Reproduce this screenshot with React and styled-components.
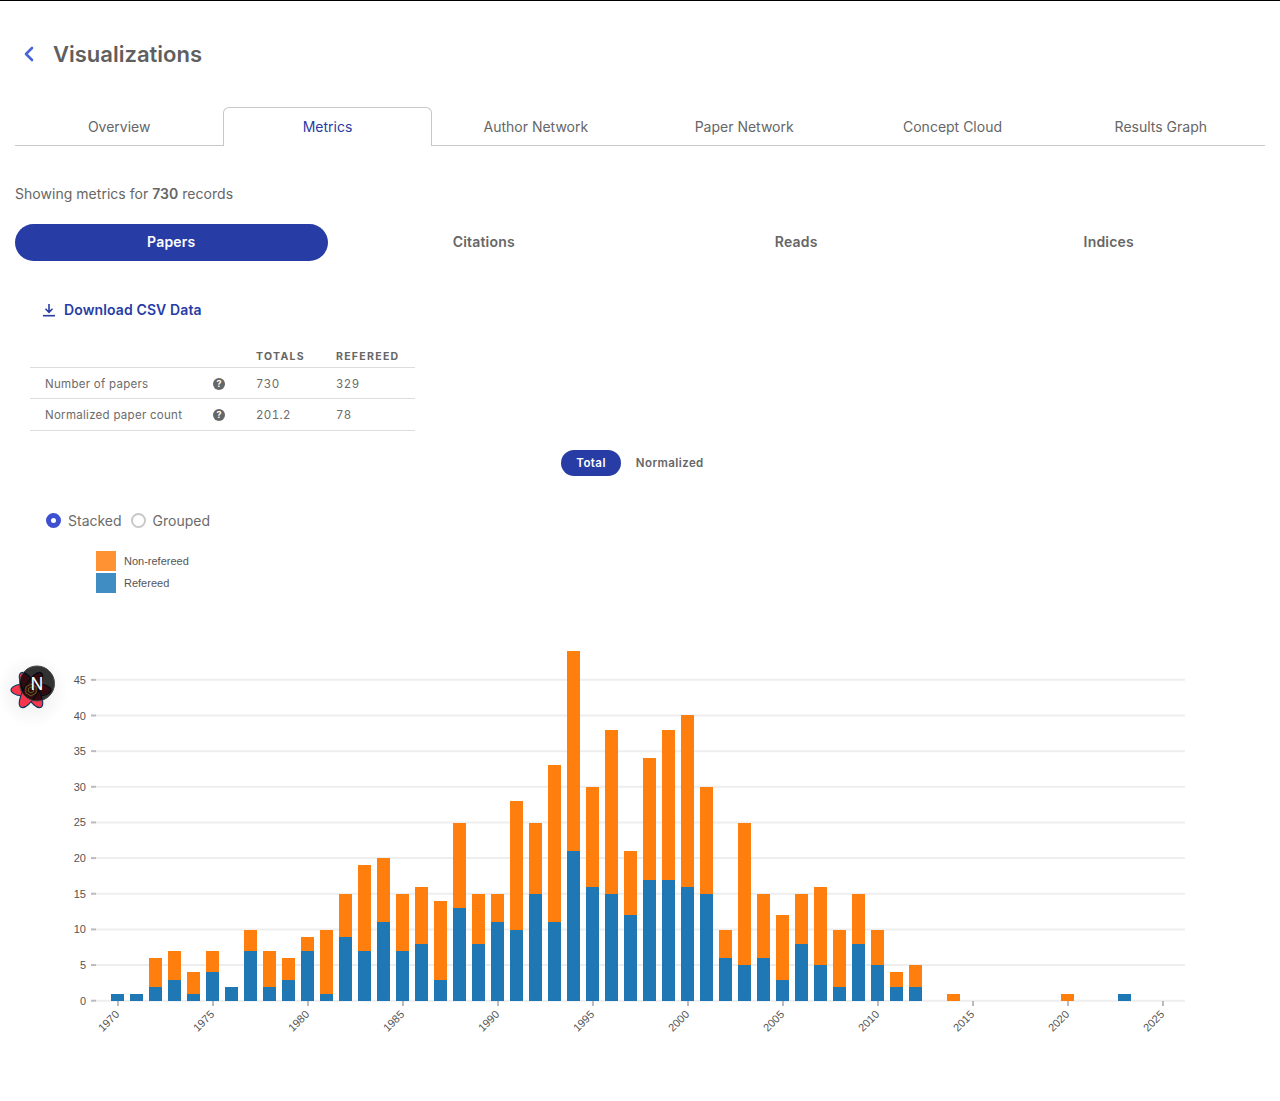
import React from "react";
import styled, { createGlobalStyle } from "styled-components";

const Global = createGlobalStyle`
  html, body { margin: 0; padding: 0; background: #fff; }
  body { font-family: Inter, "Liberation Sans", sans-serif; color: #666; }
  * { box-sizing: border-box; }
`;

const Page = styled.div`
  position: relative;
  border-top: 1px solid #000;
  min-height: 1101px;
  padding: 33px 15px 0;
`;
const Header = styled.header`
  display: flex;
  align-items: center;
  height: 40px;
  padding-left: 8px;
  gap: 16px;
`;
const BackLink = styled.a`
  display: flex;
  width: 14px;
  color: #4a63d8;
`;
const Title = styled.h1`
  margin: 0;
  font-size: 22px;
  line-height: 40px;
  font-weight: 600;
  color: #5f5f5f;
`;
const Tabs = styled.nav`
  display: grid;
  grid-template-columns: repeat(6, 1fr);
  height: 39px;
  margin-top: 33px;
  border-bottom: 1px solid #c8c8c8;
`;
const Tab = styled.a`
  display: flex;
  align-items: center;
  justify-content: center;
  height: 39px;
  padding-bottom: 2px;
  font-size: 14px;
  color: ${(p) => (p.$active ? "#283ca5" : "#666")};
  background: ${(p) => (p.$active ? "#fff" : "transparent")};
  border: 1px solid ${(p) => (p.$active ? "#c8c8c8" : "transparent")};
  border-bottom: 0;
  border-radius: 6px 6px 0 0;
`;
const Summary = styled.p`
  margin: 39px 0 0;
  font-size: 14px;
  line-height: 17px;
  letter-spacing: 0.03px;
  color: #666;
  strong { font-weight: 600; }
`;
const MetricPills = styled.div`
  display: grid;
  grid-template-columns: repeat(4, 1fr);
  margin-top: 22px;
`;
const MetricPill = styled.button`
  height: 37px;
  padding: 0 0 2px;
  border: 0;
  border-radius: 19px;
  font: 600 14px Inter, "Liberation Sans", sans-serif;
  letter-spacing: 0.2px;
  color: ${(p) => (p.$active ? "#fff" : "#666")};
  background: ${(p) => (p.$active ? "#283ca5" : "transparent")};
`;
const Download = styled.a`
  display: flex;
  align-items: center;
  gap: 8px;
  margin: 40px 0 0 27px;
  height: 17px;
  font-size: 14px;
  font-weight: 600;
  letter-spacing: 0.12px;
  color: #283ca5;
`;
const Table = styled.table`
  width: 385px;
  margin: 28px 0 0 15px;
  border-collapse: collapse;
  table-layout: fixed;
  font-size: 11.5px;
  letter-spacing: 0.28px;
  color: #6b6b6b;
`;
const LabelCol = styled.col`
  width: 183px;
`;
const HelpCol = styled.col`
  width: 43px;
`;
const TotalsCol = styled.col`
  width: 80px;
`;
const Th = styled.th`
  height: 21px;
  padding: 0;
  text-align: left;
  font-size: 10.5px;
  font-weight: 700;
  letter-spacing: 1.3px;
  text-transform: uppercase;
  color: #666;
  border-bottom: 1px solid #ddd;
`;
const Td = styled.td`
  height: 31.5px;
  padding: 2px 0 0;
  border-bottom: 1px solid #ddd;
`;
const LabelCell = styled(Td)`
  padding-left: 15px;
`;
const ValueCell = styled(Td)`
  font-variant-numeric: tabular-nums;
  letter-spacing: 0.4px;
`;
const Help = styled.span`
  display: flex;
  align-items: center;
  justify-content: center;
  width: 12px;
  height: 12px;
  border-radius: 50%;
  background: #666;
  color: #fff;
  font-size: 9px;
  font-weight: 700;
  line-height: 12px;
  letter-spacing: 0;
`;
const Toggle = styled.div`
  display: flex;
  justify-content: center;
  margin-top: 19px;
`;
const ToggleItem = styled.button`
  height: 26px;
  padding: 0 15px;
  border: 0;
  border-radius: 13px;
  font: 600 11.5px Inter, "Liberation Sans", sans-serif;
  letter-spacing: 0.42px;
  color: ${(p) => (p.$active ? "#fff" : "#666")};
  background: ${(p) => (p.$active ? "#283ca5" : "transparent")};
`;
const RadioRow = styled.div`
  display: flex;
  align-items: center;
  height: 18px;
  margin: 36px 0 0 31px;
  font-size: 14px;
  color: #6b6b6b;
`;
const Radio = styled.span`
  width: 15px;
  height: 15px;
  margin-right: 7px;
  border-radius: 50%;
  ${(p) =>
    p.$checked
      ? "border: 5px solid #3c50d0; background: #fff;"
      : "border: 2px solid #c8c8c8; background: #fff;"}
`;
const RadioLabel = styled.span`
  margin-right: 9px;
`;
const Legend = styled.div`
  display: flex;
  flex-direction: column;
  gap: 2px;
  margin: 21px 0 0 81px;
`;
const LegendRow = styled.div`
  display: flex;
  align-items: center;
  gap: 8px;
  font: 11px "Liberation Sans", Arial, sans-serif;
  color: #555;
`;
const Swatch = styled.span`
  width: 20px;
  height: 20px;
  background: ${(p) => p.$color};
`;
const Chart = styled.svg`
  display: block;
  margin-top: 47px;
  width: 1250px;
  height: 400px;
`;
const DevBadge = styled.svg`
  position: absolute;
  left: 0;
  top: 650px;
  width: 70px;
  height: 80px;
`;

const rows = [
  [1970, 1, 1], [1971, 1, 1], [1972, 6, 2], [1973, 7, 3], [1974, 4, 1], [1975, 7, 4],
  [1976, 2, 2], [1977, 10, 7], [1978, 7, 2], [1979, 6, 3], [1980, 9, 7], [1981, 10, 1],
  [1982, 15, 9], [1983, 19, 7], [1984, 20, 11], [1985, 15, 7], [1986, 16, 8], [1987, 14, 3],
  [1988, 25, 13], [1989, 15, 8], [1990, 15, 11], [1991, 28, 10], [1992, 25, 15], [1993, 33, 11],
  [1994, 49, 21], [1995, 30, 16], [1996, 38, 15], [1997, 21, 12], [1998, 34, 17], [1999, 38, 17],
  [2000, 40, 16], [2001, 30, 15], [2002, 10, 6], [2003, 25, 5], [2004, 15, 6], [2005, 12, 3],
  [2006, 15, 8], [2007, 16, 5], [2008, 10, 2], [2009, 15, 8], [2010, 10, 5], [2011, 4, 2],
  [2012, 5, 2], [2014, 1, 0], [2020, 1, 0], [2023, 1, 1],
];
const Y0 = 1001;
const BAR_UNIT = 7.14;
const GRID_UNIT = 7.13;
const xOf = (year) => 118 + (year - 1970) * 19;
const yTicks = [0, 5, 10, 15, 20, 25, 30, 35, 40, 45];
const xTicks = [1970, 1975, 1980, 1985, 1990, 1995, 2000, 2005, 2010, 2015, 2020, 2025];

function BarChart() {
  return (
    <Chart viewBox="15 640 1250 400" role="img" aria-label="Papers per year">
      {yTicks.map((t) => {
        const y = Y0 - 0.3 - t * GRID_UNIT;
        return (
          <g key={t}>
            <line x1={96} x2={1185} y1={y} y2={y} stroke="#eee" strokeWidth={2} />
            <line x1={91} x2={96} y1={y} y2={y} stroke="#bbb" strokeWidth={2} />
            <text x={86} y={y + 4} textAnchor="end" fontFamily="Liberation Sans, Arial, sans-serif" fontSize={11} fill="#555">
              {t}
            </text>
          </g>
        );
      })}
      {xTicks.map((year) => {
        const x = xOf(year);
        return (
          <g key={year}>
            <line x1={x} x2={x} y1={1001} y2={1006} stroke="#bbb" strokeWidth={2} />
            <text
              transform={`translate(${x + 2} 1015) rotate(-45)`}
              textAnchor="end"
              fontFamily="Liberation Sans, Arial, sans-serif"
              fontSize={11}
              fill="#555"
            >
              {year}
            </text>
          </g>
        );
      })}
      {rows.map(([year, total, refereed]) => {
        const x = xOf(year) - 7;
        return (
          <g key={year} shapeRendering="crispEdges">
            {total > refereed && (
              <rect x={x} width={13} y={Y0 - total * BAR_UNIT} height={(total - refereed) * BAR_UNIT} fill="#ff7f0e" />
            )}
            {refereed > 0 && <rect x={x} width={13} y={Y0 - refereed * BAR_UNIT} height={refereed * BAR_UNIT} fill="#1f77b4" />}
          </g>
        );
      })}
    </Chart>
  );
}

function NextBadge() {
  return (
    <DevBadge viewBox="0 650 70 80">
      <defs>
        <radialGradient id="glow">
          <stop offset="0.5" stopColor="#000" stopOpacity="0.04" />
          <stop offset="1" stopColor="#000" stopOpacity="0" />
        </radialGradient>
      </defs>
      <circle cx="32" cy="690" r="36" fill="url(#glow)" />
      <g fill="#f9354c" stroke="#0b3b5e" strokeWidth="1.2">
        <ellipse cx="31" cy="689" rx="20" ry="7" />
        <ellipse cx="31" cy="689" rx="20" ry="7" transform="rotate(60 31 689)" />
        <ellipse cx="31" cy="689" rx="20" ry="7" transform="rotate(120 31 689)" />
      </g>
      <circle cx="37" cy="682.5" r="17.5" fill="#000" fillOpacity="0.8" stroke="#4a4a4a" strokeWidth="1" />
      <g fill="none" stroke="#6a6a20" strokeWidth="0.9">
        <polygon points="31,683 36.2,686 36.2,692 31,695 25.8,692 25.8,686" />
        <polygon points="31,686 33.6,687.5 33.6,690.5 31,692 28.4,690.5 28.4,687.5" />
      </g>
      <text x="37" y="689" textAnchor="middle" fontFamily="Inter, sans-serif" fontSize="17" fontWeight="400" fill="#fff">
        N
      </text>
    </DevBadge>
  );
}

const ChevronLeft = () => (
  <svg width="12" height="16" viewBox="0 0 12 16" fill="none" stroke="currentColor" strokeWidth="2.6" strokeLinecap="round" strokeLinejoin="round">
    <path d="M9 2 L3 8 L9 14" />
  </svg>
);
const DownloadIcon = () => (
  <svg width="14" height="14" viewBox="0 0 14 14" fill="none" stroke="currentColor" strokeWidth="1.6">
    <path d="M7 1 V9 M3.5 5.8 L7 9.3 L10.5 5.8" />
    <path d="M1 12.7 H13" />
  </svg>
);

export default function App() {
  return (
    <Page>
      <Global />
      <Header>
        <BackLink><ChevronLeft /></BackLink>
        <Title>Visualizations</Title>
      </Header>
      <Tabs>
        {["Overview", "Metrics", "Author Network", "Paper Network", "Concept Cloud", "Results Graph"].map((t) => (
          <Tab key={t} $active={t === "Metrics"}>{t}</Tab>
        ))}
      </Tabs>
      <Summary>Showing metrics for <strong>730</strong> records</Summary>
      <MetricPills>
        {["Papers", "Citations", "Reads", "Indices"].map((t) => (
          <MetricPill key={t} $active={t === "Papers"}>{t}</MetricPill>
        ))}
      </MetricPills>
      <Download><DownloadIcon />Download CSV Data</Download>
      <Table>
        <colgroup>
          <LabelCol />
          <HelpCol />
          <TotalsCol />
          <col />
        </colgroup>
        <thead>
          <tr><Th colSpan={2} /><Th>Totals</Th><Th>Refereed</Th></tr>
        </thead>
        <tbody>
          <tr>
            <LabelCell>Number of papers</LabelCell>
            <Td><Help>?</Help></Td>
            <ValueCell>730</ValueCell><ValueCell>329</ValueCell>
          </tr>
          <tr>
            <LabelCell>Normalized paper count</LabelCell>
            <Td><Help>?</Help></Td>
            <ValueCell>201.2</ValueCell><ValueCell>78</ValueCell>
          </tr>
        </tbody>
      </Table>
      <Toggle>
        <ToggleItem $active>Total</ToggleItem>
        <ToggleItem>Normalized</ToggleItem>
      </Toggle>
      <RadioRow>
        <Radio $checked /><RadioLabel>Stacked</RadioLabel>
        <Radio /><RadioLabel>Grouped</RadioLabel>
      </RadioRow>
      <Legend>
        <LegendRow><Swatch $color="#ff9232" />Non-refereed</LegendRow>
        <LegendRow><Swatch $color="#3f8dc2" />Refereed</LegendRow>
      </Legend>
      <BarChart />
      <NextBadge />
    </Page>
  );
}
